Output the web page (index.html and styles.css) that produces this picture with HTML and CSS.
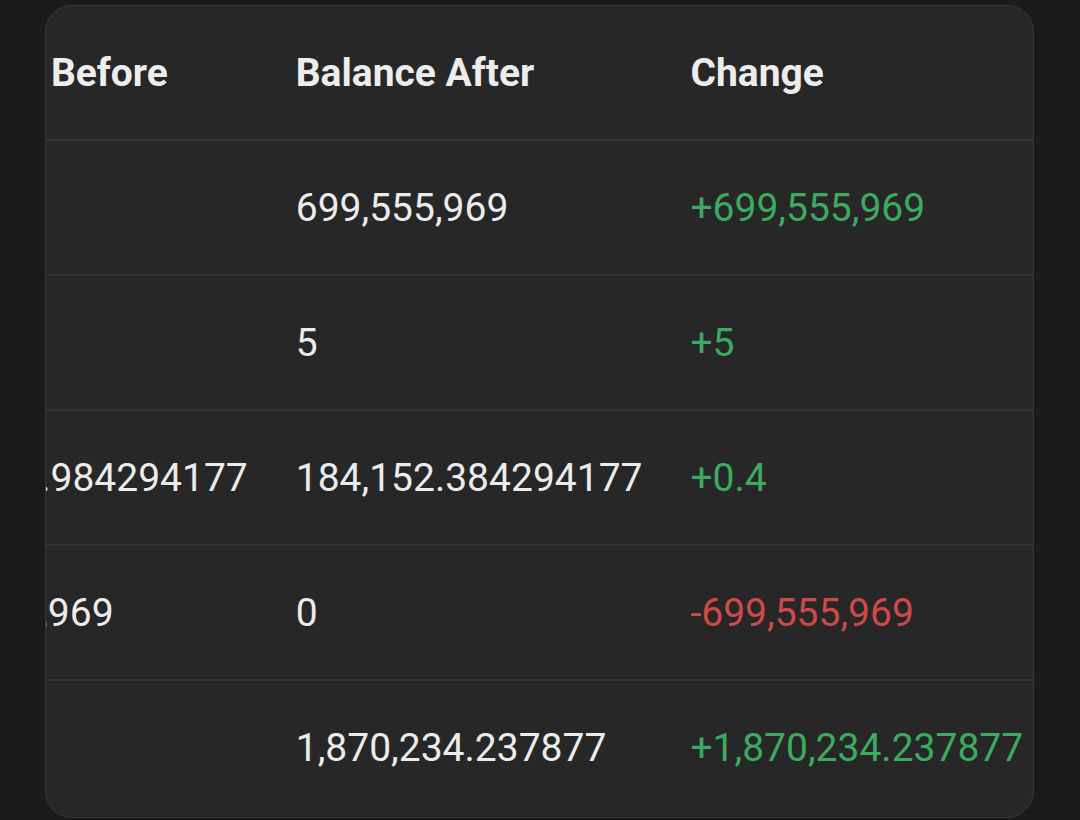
FILE: index.html
```html
<!DOCTYPE html>
<html lang="en">
<head>
<meta charset="utf-8">
<title>Balances</title>
<link rel="stylesheet" href="styles.css">
</head>
<body>
<div class="card">
  <table class="balances">
    <thead>
      <tr>
        <th>Balance Before</th>
        <th>Balance After</th>
        <th>Change</th>
      </tr>
    </thead>
    <tbody>
      <tr>
        <td>0</td>
        <td>699,555,969</td>
        <td class="pos">+699,555,969</td>
      </tr>
      <tr>
        <td>0</td>
        <td>5</td>
        <td class="pos">+5</td>
      </tr>
      <tr>
        <td>184,151.984294177</td>
        <td>184,152.384294177</td>
        <td class="pos">+0.4</td>
      </tr>
      <tr>
        <td>699,555,969</td>
        <td>0</td>
        <td class="neg">-699,555,969</td>
      </tr>
      <tr class="last">
        <td>0</td>
        <td>1,870,234.237877</td>
        <td class="pos">+1,870,234.237877</td>
      </tr>
    </tbody>
  </table>
</div>
</body>
</html>
```

FILE: styles.css
```css
html, body {
  margin: 0;
  padding: 0;
  background: #1b1b1b;
}

body {
  font-family: Roboto, "Liberation Sans", sans-serif;
  color: #ececec;
}

.card {
  box-sizing: border-box;
  width: 989px;
  height: 813px;
  margin: 5px 0 0 45px;
  background: #272727;
  border: 1px solid #363636;
  border-radius: 27px;
  overflow: hidden;
}

.balances {
  border-collapse: separate;
  border-spacing: 0;
  margin-left: -169px;
  font-size: 39px;
  line-height: 45px;
  white-space: nowrap;
}

.balances th,
.balances td {
  padding: 45px 24px 43px;
  text-align: left;
  border-bottom: 2px solid #333333;
}

.balances th {
  font-weight: 700;
  color: #ededed;
}

.balances td {
  font-weight: 400;
  color: #ececec;
}

.balances tr.last td {
  border-bottom: none;
}

.balances td.pos {
  color: #3dab5f;
}

.balances td.neg {
  color: #cc4a4a;
}
```
